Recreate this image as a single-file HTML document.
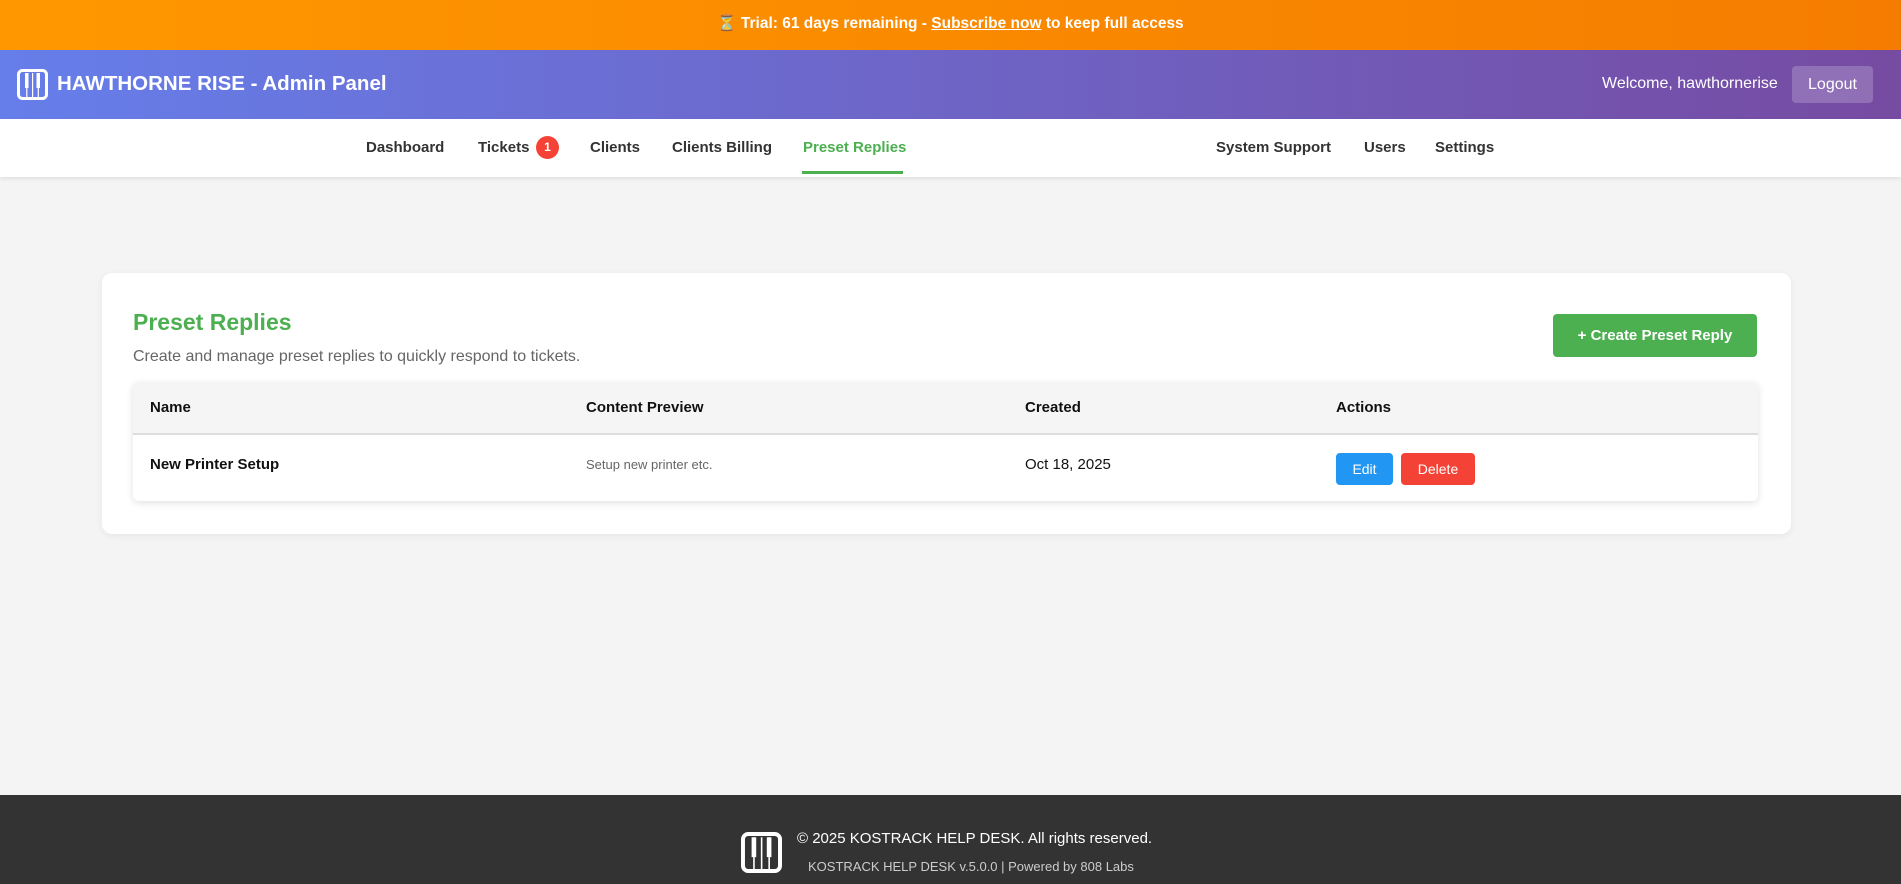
<!DOCTYPE html>
<html><head><meta charset="utf-8"><style>
*{box-sizing:border-box;margin:0;padding:0}
body{width:1901px;height:884px;overflow:hidden;background:#f4f4f4;font-family:"Liberation Sans",sans-serif;position:relative}
.trial{position:absolute;top:0;left:0;width:1901px;height:50px;background:linear-gradient(90deg,#ff9800,#f57c00);color:#fff;font-weight:bold;font-size:15.5px;text-align:center;line-height:48px}
.trial u{color:#fff}
.hdr{position:absolute;top:50px;left:0;width:1901px;height:69px;background:linear-gradient(90deg,#667eea,#764ba2);color:#fff}
.hdr .t{position:absolute;left:57px;top:22px;font-size:20.5px;font-weight:bold}
.hdr .w{position:absolute;left:1602px;top:25px;font-size:16px}
.hdr .lo{position:absolute;left:1792px;top:16px;width:81px;height:37px;background:rgba(255,255,255,.2);border-radius:4px;font-size:16px;text-align:center;line-height:37px}
.nav{position:absolute;top:119px;left:0;width:1901px;height:58px;background:#fff;box-shadow:0 2px 4px rgba(0,0,0,.08)}
.nav span{position:absolute;top:20px;font-size:15px;color:#333;font-weight:600}
.badge{display:inline-block;width:23px;height:23px;border-radius:12px;background:#f44336;color:#fff;font-size:12px;text-align:center;line-height:23px;position:absolute;top:-3px}
.card{position:absolute;left:102px;top:273px;width:1689px;height:261px;background:#fff;border-radius:10px;box-shadow:0 2px 8px rgba(0,0,0,.06)}
.abs{position:absolute}
.tbl{position:absolute;left:31px;top:109px;width:1625px;height:119px;background:#fff;border-radius:6px;box-shadow:0 2px 8px rgba(0,0,0,.12);overflow:hidden}
.th{position:absolute;left:0;top:0;width:100%;height:53px;background:#f5f5f5;border-bottom:2px solid #ddd}
.th span,.row span{position:absolute;font-size:15px;font-weight:bold;color:#111}
.btn{position:absolute;color:#fff;font-size:14px;text-align:center;border-radius:4px}
.foot{position:absolute;left:0;top:795px;width:1901px;height:89px;background:#333}
</style></head><body>
<div class="trial">⏳ Trial: 61 days remaining - <u>Subscribe now</u> to keep full access</div>
<div class="hdr">
<svg class="abs" style="left:17px;top:19px" width="31" height="31" viewBox="0 0 31 31"><rect x="1.5" y="1.5" width="28" height="28" rx="4" fill="none" stroke="#fff" stroke-width="3"/><rect x="8" y="4" width="3.5" height="15" fill="#fff"/><rect x="19.5" y="4" width="3.5" height="15" fill="#fff"/><rect x="9.2" y="4" width="1.2" height="24" fill="#fff"/><rect x="15" y="4" width="1.2" height="24" fill="#fff"/><rect x="20.7" y="4" width="1.2" height="24" fill="#fff"/></svg>
<div class="t">HAWTHORNE RISE - Admin Panel</div>
<div class="w">Welcome, hawthornerise</div>
<div class="lo">Logout</div>
</div>
<div class="nav">
<span style="left:366px">Dashboard</span>
<span style="left:478px">Tickets<i class="badge" style="left:58px;font-style:normal">1</i></span>
<span style="left:590px">Clients</span>
<span style="left:672px">Clients Billing</span>
<span style="left:803px;color:#4caf50">Preset Replies</span>
<div class="abs" style="left:802px;top:52px;width:101px;height:3px;background:#4caf50"></div>
<span style="left:1216px">System Support</span>
<span style="left:1364px">Users</span>
<span style="left:1435px">Settings</span>
</div>
<div class="card">
<div class="abs" style="left:31px;top:36px;font-size:23px;font-weight:bold;color:#4caf50">Preset Replies</div>
<div class="abs" style="left:31px;top:75px;font-size:16px;color:#666">Create and manage preset replies to quickly respond to tickets.</div>
<div class="btn" style="left:1451px;top:41px;width:204px;height:43px;line-height:43px;background:#4caf50;font-weight:bold;font-size:15px">+ Create Preset Reply</div>
<div class="tbl">
<div class="th"><span style="left:17px;top:17px">Name</span><span style="left:453px;top:17px">Content Preview</span><span style="left:892px;top:17px">Created</span><span style="left:1203px;top:17px">Actions</span></div>
<div class="row"><span style="left:17px;top:74px">New Printer Setup</span><span style="left:453px;top:75px;font-size:13px;font-weight:normal;color:#666">Setup new printer etc.</span><span style="left:892px;top:74px;font-weight:normal">Oct 18, 2025</span></div>
<div class="btn" style="left:1203px;top:71px;width:57px;height:32px;line-height:32px;background:#2196f3">Edit</div>
<div class="btn" style="left:1268px;top:71px;width:74px;height:32px;line-height:32px;background:#f44336">Delete</div>
</div>
</div>
<div class="foot">
<svg class="abs" style="left:741px;top:37px" width="41" height="41" viewBox="0 0 31 31"><rect x="1.5" y="1.5" width="28" height="28" rx="4" fill="none" stroke="#fff" stroke-width="3"/><rect x="8" y="4" width="3.5" height="15" fill="#fff"/><rect x="19.5" y="4" width="3.5" height="15" fill="#fff"/><rect x="9.2" y="4" width="1.2" height="24" fill="#fff"/><rect x="15" y="4" width="1.2" height="24" fill="#fff"/><rect x="20.7" y="4" width="1.2" height="24" fill="#fff"/></svg>
<div class="abs" style="left:797px;top:35px;font-size:15px;color:#fff">© 2025 KOSTRACK HELP DESK. All rights reserved.</div>
<div class="abs" style="left:808px;top:64px;font-size:13px;color:#ccc">KOSTRACK HELP DESK v.5.0.0 | Powered by 808 Labs</div>
</div>
</body></html>
